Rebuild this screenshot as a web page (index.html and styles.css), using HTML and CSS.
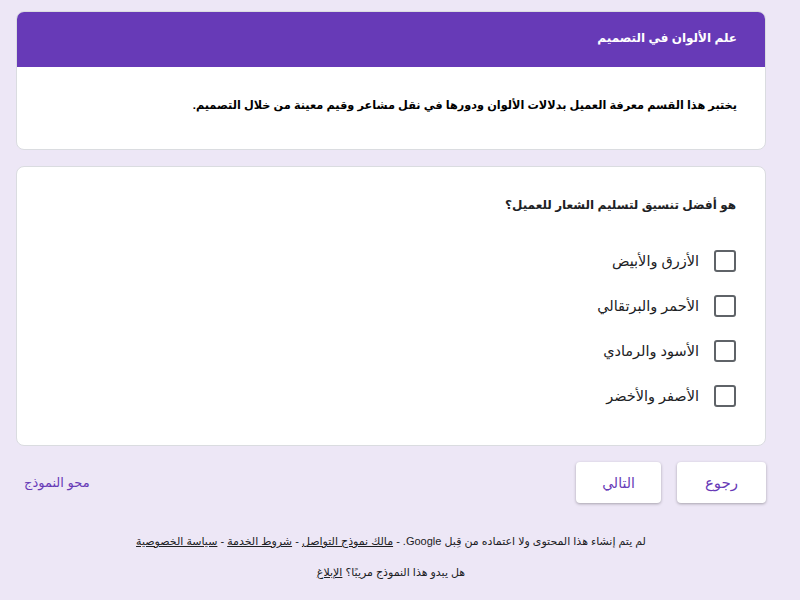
FILE: index.html
```html
<!DOCTYPE html>
<html lang="ar" dir="rtl">
<head>
    <meta charset="UTF-8">
    <title>علم الألوان في التصميم</title>
    <link rel="stylesheet" href="styles.css">
</head>
<body>
    <div class="form-container">
        <!-- Section header -->
        <div class="card section-card">
            <div class="section-title">علم الألوان في التصميم</div>
            <div class="section-desc">يختبر هذا القسم معرفة العميل بدلالات الألوان ودورها في نقل مشاعر وقيم معينة من خلال التصميم.</div>
        </div>

        <!-- Question -->
        <div class="card question-card">
            <div class="question-title">هو أفضل تنسيق لتسليم الشعار للعميل؟</div>
            <div class="options">
                <label class="option"><span class="box"></span>الأزرق والأبيض</label>
                <label class="option"><span class="box"></span>الأحمر والبرتقالي</label>
                <label class="option"><span class="box"></span>الأسود والرمادي</label>
                <label class="option"><span class="box"></span>الأصفر والأخضر</label>
            </div>
        </div>

        <div class="nav-row">
            <button class="nav-btn wide">رجوع</button>
            <button class="nav-btn">التالي</button>
            <a class="clear-link" href="#">محو النموذج</a>
        </div>

        <div class="footer">
            <p>لم يتم إنشاء هذا المحتوى ولا اعتماده من قِبل Google. - <a href="#">مالك نموذج التواصل</a> - <a href="#">شروط الخدمة</a> - <a href="#">سياسة الخصوصية</a></p>
            <p>هل يبدو هذا النموذج مريبًا؟ <a href="#">الإبلاغ</a></p>
        </div>
    </div>
</body>
</html>
```

FILE: styles.css
```css
body {
    margin: 0;
    background-color: #ede7f6;
    font-family: Arial, "Liberation Sans", "DejaVu Sans", sans-serif;
    color: #202124;
}
.form-container {
    width: 750px;
    margin: 11px 34px 0 16px;
    display: flex;
    flex-direction: column;
    gap: 16px;
}
.card {
    background: #fff;
    border: 1px solid #dadce0;
    border-radius: 8px;
    overflow: hidden;
}
.section-title {
    background-color: #673ab7;
    color: #fff;
    font-size: 12px;
    font-weight: bold;
    height: 55px;
    display: flex;
    align-items: center;
    padding: 0 28px 3px;
    box-sizing: border-box;
}
.section-desc {
    font-size: 11.3px;
    font-weight: bold;
    color: #000;
    padding: 32px 28px 0;
    box-sizing: border-box;
    height: 82px;
}
.question-card {
    padding: 31px 29px 0;
    height: 280px;
    box-sizing: border-box;
}
.question-title {
    font-size: 12px;
    font-weight: bold;
    color: #202124;
}
.options {
    margin-top: 37px;
    display: flex;
    flex-direction: column;
    gap: 22px;
}
.option {
    display: flex;
    align-items: center;
    gap: 15px;
    font-size: 14.5px;
    color: #202124;
    height: 23px;
}
.box {
    width: 18px;
    height: 18px;
    border: 2px solid #5f6368;
    border-radius: 3px;
}
.nav-row {
    display: flex;
    align-items: center;
    gap: 16px;
}
.nav-btn {
    font-family: inherit;
    background: #fff;
    color: #673ab7;
    font-size: 14px;
    border: none;
    border-radius: 4px;
    height: 41px;
    width: 85px;
    box-shadow: 0 1px 3px rgba(0, 0, 0, 0.3);
    cursor: pointer;
}
.nav-btn.wide {
    width: 89px;
    font-size: 15px;
}
.clear-link {
    margin-right: auto;
    margin-left: 8px;
    color: #673ab7;
    font-size: 13px;
    text-decoration: none;
}
.footer {
    text-align: center;
    font-size: 11px;
    color: #202124;
    margin-top: 16px;
}
.footer p {
    margin: 0 0 18px;
}
.footer a {
    color: #202124;
}
```
